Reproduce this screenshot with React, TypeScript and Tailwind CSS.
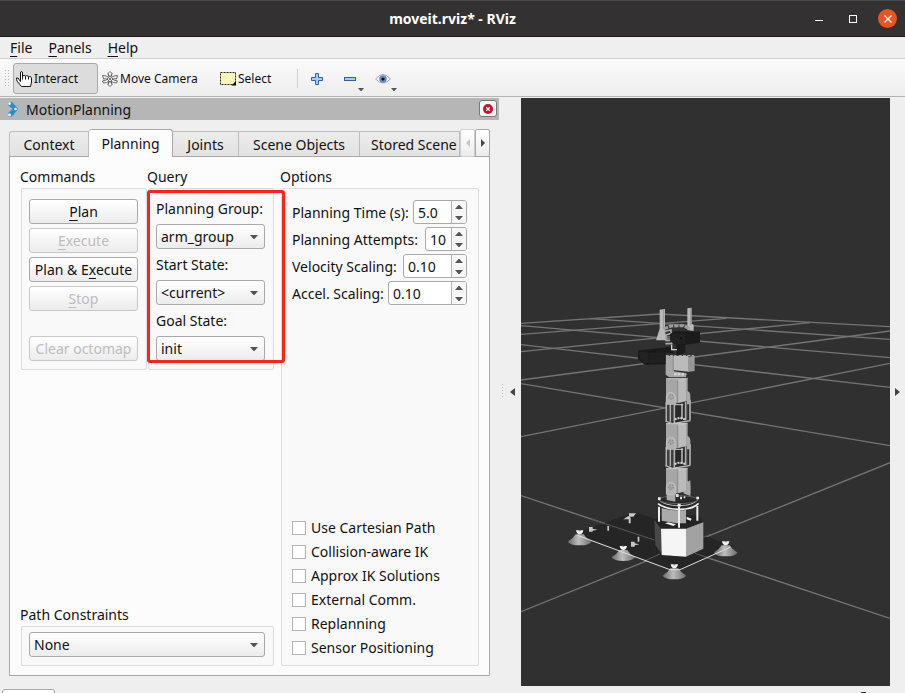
import type { ReactNode } from "react";

const buttonFace =
  "rounded-[3px] border bg-linear-to-b from-white to-[#ececec] leading-5";

function Mnemonic({ children }: { children: ReactNode }) {
  return <span className="underline decoration-1 underline-offset-3">{children}</span>;
}

function TitleBar() {
  return (
    <header className="grid h-[37px] shrink-0 grid-cols-[1fr_auto_1fr] items-center border-t border-b border-t-[#4a4848] border-b-[#1e1d1d] bg-[#333131] pr-2 pl-2">
      <h1 className="col-start-2 text-sm font-bold text-white">moveit.rviz* - RViz</h1>
      <div className="flex items-center justify-end">
        <button aria-label="Minimize" className="flex h-5 w-[34px] items-center justify-center">
          <span className="mt-1 h-px w-2 bg-white" />
        </button>
        <button aria-label="Maximize" className="flex h-5 w-[34px] items-center justify-center">
          <span className="size-2 border border-white" />
        </button>
        <button
          aria-label="Close"
          className="ml-2 flex size-[19px] items-center justify-center rounded-full bg-[#e95420]"
        >
          <svg viewBox="0 0 8 8" className="size-2" stroke="white" strokeWidth="1.3">
            <path d="M0.5 0.5 7.5 7.5M7.5 0.5 0.5 7.5" />
          </svg>
        </button>
      </div>
    </header>
  );
}

function MenuBar() {
  return (
    <nav className="flex h-[22px] shrink-0 items-center gap-4 border-b border-[#cfcfcf] bg-[#efefef] pl-[10px]">
      <button><Mnemonic>F</Mnemonic>ile</button>
      <button><Mnemonic>P</Mnemonic>anels</button>
      <button><Mnemonic>H</Mnemonic>elp</button>
    </nav>
  );
}

function DropArrow() {
  return (
    <svg viewBox="0 0 8 4" className="h-1 w-2" fill="#555">
      <path d="M0 0H8L4.5 4H3.5Z" />
    </svg>
  );
}

function MenuArrow() {
  return (
    <svg viewBox="0 0 6 3" className="h-[3px] w-[6px]" fill="#555">
      <path d="M0 0H6L3.5 3H2.5Z" />
    </svg>
  );
}

function ToolBar() {
  return (
    <div className="flex h-[38px] shrink-0 items-center border-b border-[#b4b4b4] bg-linear-to-b from-[#fbfbfb] to-[#ededed] pt-[2px] pl-[5px] text-xs">
      <svg width="8" height="17" fill="#b8b8b8">
        {[0, 3, 6, 9, 12, 15].map((y) => (
          <g key={y}>
            <rect x="0" y={y} width="1" height="1" />
            <rect x="3" y={y} width="1" height="1" />
          </g>
        ))}
      </svg>
      <button className="flex h-[31px] w-[85px] items-center gap-[2px] rounded-[3px] border border-[#a9a9a9] bg-[#dcdcdc] pl-[2px]">
        <svg viewBox="0 0 16 16" className="size-4" fill="white" stroke="#111" strokeWidth="1">
          <path d="M4.5 8V2Q4.5 .5 5.5 .5T6.5 2V5.5Q6.5 4.500 8 4.500T9.500 5.500Q10 4.500 11 4.500T12.500 6Q15.500 4.500 15.500 8V11L14.500 15.500H5.500L1 10Q.500 9 .500 7Q2.500 6 3.500 9.500L4.500 10.500V8" />
          <path d="M6.500 5V8.500M9.500 5.500V8.500M12.500 6V8.500" />
        </svg>
        Interact
      </button>
      <button className="ml-1 flex w-[117px] items-center gap-[2px]">
        <svg viewBox="0 0 16 16" className="size-4 shrink-0" fill="#f7f7f7" stroke="#666" strokeWidth="1">
          <path d="M8 .5 10.500 3H9.500V5H6.500V3H5.500ZM8 15.500 5.500 13H6.500V11H9.500V13H10.500Z" />
          <path d="M.5 4.500 4 5 12 9 15.500 10 14.500 12 11.500 11.500 3.500 7.500 1.500 8Z" />
          <path d="M15.500 4.500 12 5 4 9 .5 10 1.500 12 4.500 11.500 12.500 7.500 14.500 8Z" />
          <path d="M8 5 11 8 8 11 5 8Z" />
          <circle cx="8" cy="8" r=".8" fill="#444" />
        </svg>
        Move Camera
      </button>
      <button className="ml-px flex w-[77px] items-center gap-[2px]">
        <svg viewBox="0 0 16 14" className="h-[14px] w-4 shrink-0">
          <rect x=".5" y=".5" width="15" height="12" fill="#fbf5b9" stroke="#222" strokeDasharray="2 1" />
          <path d="M16 9V13.500H11.500Z" fill="#000" />
        </svg>
        Select
      </button>
      <span className="mr-[13px] h-[19px] w-px bg-[#cfcfcf]" />
      <button aria-label="Add tool">
        <svg viewBox="0 0 12 12" className="size-3" fill="#a9cdf0" stroke="#2d62a3">
          <path d="M4.500.5H7.500V4.500H11.500V7.500H7.500V11.500H4.500V7.500H.5V4.500H4.500Z" />
        </svg>
      </button>
      <button aria-label="Remove tool" className="ml-[21px] flex h-6 items-end">
        <svg viewBox="0 0 12 4" className="mb-[10px] h-1 w-3" fill="#a9cdf0" stroke="#2d62a3">
          <rect x=".5" y=".5" width="11" height="3" />
        </svg>
        <span className="ml-[2px]"><MenuArrow /></span>
      </button>
      <button aria-label="Views" className="ml-[11px] flex h-6 items-end">
        <svg viewBox="0 0 16 10" className="mb-[7px] h-[10px] w-4">
          <path d="M.5 5Q8-4 15.500 5Q8 13 .5 5Z" fill="#eee" stroke="#aaa" />
          <circle cx="8" cy="5" r="3.700" fill="#6d86c4" />
          <circle cx="8" cy="5" r="1.600" fill="#111" />
        </svg>
        <span><MenuArrow /></span>
      </button>
    </div>
  );
}

function DockTitle() {
  return (
    <div className="flex h-[22px] items-center bg-[#b6b6b6] pr-[2px] pl-[7px]">
      <svg viewBox="0 0 11 16" className="h-4 w-[11px]">
        <path d="M1 1H5L10.500 7V9L5 15.500H1V12L5.500 8 1 4Z" fill="#2a8fd0" />
        <circle cx="2.500" cy="2.500" r="1.500" fill="#e8f4fc" />
        <circle cx="8.500" cy="8" r="1.300" fill="#e8f4fc" />
        <circle cx="2.500" cy="13.800" r="1.500" fill="#e8f4fc" />
      </svg>
      <h2 className="mt-px ml-2 flex-1">MotionPlanning</h2>
      <button
        aria-label="Close panel"
        className="mb-px flex h-[17px] w-[18px] items-center justify-center rounded-[3px] border border-[#777] bg-[#f6f6f6]"
      >
        <svg viewBox="0 0 10 10" className="size-[10px]">
          <circle cx="5" cy="5" r="5" fill="#c8102e" />
          <path d="M3.200 3.200 6.800 6.800M6.800 3.200 3.200 6.800" stroke="white" strokeWidth="1.300" />
        </svg>
      </button>
    </div>
  );
}

const idleTab =
  "h-[25px] shrink-0 border-t border-r border-[#bdbdbd] bg-linear-to-b from-[#ececec] to-[#e2e2e2] whitespace-nowrap";

function TabStrip() {
  return (
    <div className="z-10 -mb-px flex h-7 items-end" role="tablist">
      <div className="flex h-7 min-w-0 flex-1 items-end overflow-hidden">
        <button role="tab" className={`${idleTab} mb-px w-20 rounded-tl-[3px] border-l pt-px`}>Context</button>
        <button
          role="tab"
          aria-selected="true"
          className="h-7 w-[84px] shrink-0 rounded-t-[3px] border-t border-r border-[#a9a9a9] bg-[#fcfcfc] pt-px"
        >
          Planning
        </button>
        <button role="tab" className={`${idleTab} mb-px w-[66px] pt-px`}>Joints</button>
        <button role="tab" className={`${idleTab} mb-px w-[121px] pt-px`}>Scene Objects</button>
        <button role="tab" className={`${idleTab} mb-px w-[100px] pt-px pl-[11px] text-left`}>Stored Scene</button>
      </div>
      <button
        aria-label="Scroll tabs left"
        className="flex h-7 w-[15px] items-center justify-center rounded-[2px] border border-[#cfcfcf] bg-linear-to-b from-white to-[#ececec]"
      >
        <svg viewBox="0 0 4 8" className="h-2 w-1" fill="#c5c5c5"><path d="M4 0V8L0 4Z" /></svg>
      </button>
      <button
        aria-label="Scroll tabs right"
        className="flex h-7 w-[15px] items-center justify-center rounded-[2px] border border-[#a9a9a9] bg-linear-to-b from-white to-[#ececec]"
      >
        <svg viewBox="0 0 4 8" className="h-2 w-1" fill="#444"><path d="M0 0V8L4 4Z" /></svg>
      </button>
    </div>
  );
}

function Combo({ id, value, name }: { id: string; value: string; name?: string }) {
  return (
    <div className="relative h-[25px]">
      <select
        id={id}
        aria-label={name}
        className={`${buttonFace} h-[25px] w-full appearance-none border-[#a9a9a9] pl-1`}
      >
        <option>{value}</option>
      </select>
      <span className="pointer-events-none absolute top-[11px] right-[7px]">
        <DropArrow />
      </span>
    </div>
  );
}

function Field({ id, label, value }: { id: string; label: string; value: string }) {
  return (
    <div>
      <label htmlFor={id} className="mb-[5px] block h-5 leading-5 whitespace-nowrap">{label}</label>
      <Combo id={id} value={value} />
    </div>
  );
}

function Group({ title, className, children }: { title: string; className: string; children: ReactNode }) {
  return (
    <section className="flex min-w-0 flex-1 flex-col">
      <h3 className="-ml-px h-[21px] leading-5">{title}</h3>
      <div className={`flex flex-1 flex-col rounded-[2px] border border-[#dcdcdc] bg-[#f9f9f9] ${className}`}>
        {children}
      </div>
    </section>
  );
}

const command = `${buttonFace} h-[25px] whitespace-nowrap`;
const enabled = "border-[#a9a9a9]";
const disabled = "border-[#c8c8c8] text-[#bdbdbd]";

function Commands() {
  return (
    <Group title="Commands" className="gap-1 pt-[10px] pr-2 pb-2 pl-[7px]">
      <button className={`${command} ${enabled}`}><Mnemonic>P</Mnemonic>lan</button>
      <button disabled className={`${command} ${disabled}`}><Mnemonic>E</Mnemonic>xecute</button>
      <button className={`${command} ${enabled}`}>Plan &amp; E<Mnemonic>x</Mnemonic>ecute</button>
      <button disabled className={`${command} ${disabled}`}><Mnemonic>S</Mnemonic>top</button>
      <button disabled className={`${command} ${disabled} mt-[21px]`}>Clear octomap</button>
    </Group>
  );
}

function Query() {
  return (
    <div className="relative flex flex-1">
      <Group title="Query" className="gap-[6px] pt-[10px] pr-2 pb-2 pl-[7px]">
        <Field id="planning-group" label="Planning Group:" value="arm_group" />
        <Field id="start-state" label="Start State:" value="<current>" />
        <Field id="goal-state" label="Goal State:" value="init" />
      </Group>
      <div className="pointer-events-none absolute top-[23px] -right-[11px] bottom-[7px] -left-px rounded-[3px] border-[3px] border-[#fb2418]" />
    </div>
  );
}

const spins = [
  { id: "time", label: "Planning Time (s):", value: "5.0", width: "w-[54px]" },
  { id: "attempts", label: "Planning Attempts:", value: "10", width: "w-[42px]" },
  { id: "velocity", label: "Velocity Scaling:", value: "0.10", width: "w-16" },
  { id: "accel", label: "Accel. Scaling:", value: "0.10", width: "w-[79px]" },
];

const checks = [
  "Use Cartesian Path",
  "Collision-aware IK",
  "Approx IK Solutions",
  "External Comm.",
  "Replanning",
  "Sensor Positioning",
];

function Options() {
  return (
    <Group title="Options" className="pt-[11px] pr-[11px] pb-[5px] pl-[10px]">
      <div className="flex flex-col gap-[3px]">
        {spins.map((s) => (
          <div key={s.id} className="flex h-6 items-center justify-between">
            <label htmlFor={s.id} className="pt-px whitespace-nowrap">{s.label}</label>
            <div className={`flex h-6 shrink-0 overflow-hidden rounded-[3px] border border-[#a9a9a9] bg-white ${s.width}`}>
              <input id={s.id} defaultValue={s.value} className="min-w-0 flex-1 pt-px pl-1" />
              <div className="flex w-[15px] flex-col border-l border-[#b4b4b4] bg-[#f7f7f7]">
                <button aria-label={`Increase ${s.label}`} className="flex flex-1 items-center justify-center">
                  <svg viewBox="0 0 8 4" className="h-1 w-2" fill="#555"><path d="M0 4H8L4.500 0H3.500Z" /></svg>
                </button>
                <button aria-label={`Decrease ${s.label}`} className="flex flex-1 items-center justify-center">
                  <DropArrow />
                </button>
              </div>
            </div>
          </div>
        ))}
      </div>
      <div className="mt-auto">
        {checks.map((c) => (
          <label key={c} className="flex h-6 items-center gap-[5px] whitespace-nowrap">
            <input type="checkbox" className="mb-px size-[14px] appearance-none border border-[#b4b4b4] bg-white" />
            {c}
          </label>
        ))}
      </div>
    </Group>
  );
}

function MotionPlanningDock() {
  return (
    <aside className="flex w-[499px] shrink-0 flex-col">
      <DockTitle />
      <div className="flex flex-1 flex-col pt-[9px] pr-[9px] pl-[9px]">
        <TabStrip />
        <div className="flex flex-1 gap-[7px] border border-[#a9a9a9] bg-[#fcfcfc] pt-[10px] pr-[10px] pb-[9px] pl-[11px]">
          <div className="flex w-[253px] shrink-0 flex-col justify-between">
            <div className="flex gap-px">
              <Commands />
              <Query />
            </div>
            <div className="flex">
              <Group title="Path Constraints" className="pt-[5px] pr-2 pb-2 pl-[7px]">
                <Combo id="constraints" name="Path Constraints" value="None" />
              </Group>
            </div>
          </div>
          <Options />
        </div>
      </div>
      <div className="h-[17px] overflow-hidden pt-[13px] pl-[2px]">
        <button aria-label="Reset" className="block h-6 w-[53px] rounded-[3px] border border-[#a9a9a9] bg-white" />
      </div>
    </aside>
  );
}

const gridLines = [
  "M33 100 450 72 1140 110",
  "M33 133 650 85",
  "M33 185 900 98",
  "M33 270 1140 123",
  "M33 440 1140 220",
  "M33 965 1140 518",
  "M240 86 1140 148",
  "M33 107 1140 203",
  "M33 164 1140 292",
  "M33 281 1140 467",
  "M33 617 1140 985",
];

function Foot({ x, y }: { x: number; y: number }) {
  return (
    <g transform={`translate(${x} ${y})`}>
      <path d="M-12-8H12Q20 6 36 14Q28 25 0 25T-36 14Q-20 6-12-8Z" fill="url(#cone)" />
      <path d="M-11-20H11Q9-8 0-8T-11-20Z" fill="#f4f4f4" />
      <path d="M-3-21H3V-17H-3Z" fill="#888" />
    </g>
  );
}

function Servo({ y }: { y: number }) {
  return (
    <g transform={`translate(0 ${y})`}>
      <path d="M468 2 478 0H533V70L502 77H468Z" fill="#a6a6a6" />
      <path d="M503 7H531V68L503 76Z" fill="#bababa" />
      <path d="M468 3H532L502 8" fill="none" stroke="#d6d6d6" strokeWidth="2" />
      <path d="M503 7V76M531 2V70" stroke="#777" strokeWidth="2" />
      <path d="M531 40Q541 42 541 54V80H531Z" fill="#aaa" />
      <path d="M469 80V58Q471 44 482 44T496 58V80Z" fill="#b2b2b2" stroke="#c8c8c8" strokeWidth="2" />
      <circle cx="483" cy="58" r="7" fill="#a6a6a6" stroke="#666" strokeWidth="2" strokeDasharray="4 4" />
    </g>
  );
}

function Bracket({ y }: { y: number }) {
  return (
    <g transform={`translate(0 ${y})`}>
      <path d="M468 0V53L485 60 541 50V-5" fill="#292929" />
      <path d="M469-4V54M481 0V54M493 0V58M516 0V46M527-6V50M540-12V50" stroke="#b0b0b0" strokeWidth="5" fill="none" />
      <path d="M487-4V54M475 0V50M533-5V48" stroke="#444" strokeWidth="3" />
      <path d="M467 52 487 60 541 51" stroke="#c4c4c4" strokeWidth="4" fill="none" />
      <path d="M494 47 510 42 525 47" stroke="#ddd" strokeWidth="6" strokeDasharray="6 3" fill="none" />
      <path d="M495 3H520" stroke="#ccc" strokeWidth="3" />
    </g>
  );
}

function RobotView() {
  return (
    <svg
      role="img"
      aria-label="Robot arm"
      viewBox="33 -576 1107 1764"
      preserveAspectRatio="xMidYMid slice"
      className="h-full w-full bg-[#303030]"
    >
      <defs>
        <linearGradient id="cone">
          <stop offset="0" stopColor="#666" />
          <stop offset=".45" stopColor="#bdbdbd" />
          <stop offset="1" stopColor="#6c6c6c" />
        </linearGradient>
      </defs>
      <g fill="none" stroke="#747474" strokeWidth="4">
        {gridLines.map((d) => <path key={d} d={d} />)}
      </g>

      {/* base plate */}
      <path d="M196 730 350 675 385 670 670 768 510 839H480Z" fill="#252525" />
      <path d="M240 686 433 750M405 812 450 792M555 790 600 805M580 742 600 733" stroke="#5a5a5a" strokeWidth="3" />
      <Foot x={209} y={741} />
      <Foot x={340} y={788} />
      <Foot x={493} y={843} />
      <Foot x={647} y={774} />
      <path d="M202 736 480 839H510L662 771" fill="none" stroke="#e0e0e0" strokeWidth="3" />
      <path d="M357 670H378L370 680H357ZM340 688 355 678 362 683V700H356V688ZM237 711H248V716L262 719 248 722V725H237ZM292 708H297V722H292ZM383 740H388V755H383ZM363 755H374V760L388 763 374 766V770H363Z" fill="#c9c9c9" />

      {/* pedestal */}
      <path d="M433 690 455 675H565L580 697 528 716H453Z" fill="#242424" />
      <path d="M433 690 453 716V790L436 764Z" fill="#484848" />
      <path d="M453 716H528V800L455 795Z" fill="#f5f5f5" />
      <path d="M528 716 580 697V776L528 800Z" fill="#a2a2a2" />
      <path d="M455 655H528V700H500L455 692Z" fill="#aaa" />
      <path d="M465 700 475 697 498 703 490 708ZM530 680 545 686 542 692 530 688Z" fill="#eee" />
      <path d="M444 628V648Q465 661 507 661T566 646V627Z" fill="#272727" />
      <path d="M444 641Q465 658 507 658T566 640" fill="none" stroke="#eee" strokeWidth="5" />
      <path d="M446 630Q465 647 507 647T564 629" fill="none" stroke="#bbb" strokeWidth="3" />
      <ellipse cx="505" cy="629" rx="58" ry="12" fill="#292929" stroke="#777" strokeWidth="2" />
      <path d="M447 650V695M562 648V692M507 650V713" stroke="#efefef" strokeWidth="6" />
      <path d="M444 622H452V630H444ZM559 620H567V628H559ZM503 641H512V650H503Z" fill="#eee" />

      {/* arm links */}
      <path d="M470 600H496V635L470 630ZM529 580 541 570V618L520 610Z" fill="#ababab" />
      <path d="M498 612H506V621H498ZM510 620H516V628H510ZM521 619H526V625H521Z" fill="#ddd" />
      <Servo y={533} />
      <Bracket y={475} />
      <Servo y={398} />
      <Bracket y={341} />
      <Servo y={263} />
      <path d="M467 198H490L492 244 530 250 528 262H478L467 254Z" fill="#a8a8a8" />
      <path d="M489 198H535V245L489 240Z" fill="#bbb" />
      <path d="M534 202 554 197V243L534 246Z" fill="#979797" />
      <path d="M467 197H552" stroke="#bbb" strokeWidth="3" strokeDasharray="9 4" />
      <path d="M490 198V243" stroke="#777" strokeWidth="2" />
      <path d="M492 253H524" stroke="#ddd" strokeWidth="6" strokeDasharray="8 3" />
      <path d="M467 263H532" stroke="#333" strokeWidth="2" />

      {/* camera and gripper */}
      <path d="M384 183Q388 179 400 179L480 171 492 190H467V223L404 224 384 207Z" fill="#1a1a1a" />
      <path d="M388 186Q404 181 416 190V218L404 220 388 206Z" fill="#222" />
      <path d="M418 190 464 186V218L418 220Z" fill="#202020" />
      <path d="M449 59 465 57V112L468 151H438L449 116Z" fill="#b9b9b9" />
      <path d="M532 55 545 53V101L551 104V123L532 120Z" fill="#b9b9b9" />
      <path d="M461 60V116M542 55V106" stroke="#999" strokeWidth="3" />
      <path d="M462 116 483 108 520 107 540 117" stroke="#9c9c9c" strokeWidth="9" strokeDasharray="13 3" fill="none" />
      <path d="M462 124 483 120V130L468 135V151H485V161H466" fill="none" stroke="#a9a9a9" strokeWidth="5" />
      <path d="M480 132 496 123 570 125V158L526 164V188L499 197 499 164 481 155Z" fill="#1b1b1b" />
      <path d="M482 132H526V162L499 163 482 154Z" fill="#202020" />
      <circle cx="513" cy="145" r="3" fill="#0c0c0c" />
      <path d="M485 164V179H501" stroke="#d0d0d0" strokeWidth="4" fill="none" />
    </svg>
  );
}

export default function App() {
  return (
    <div className="flex h-screen flex-col overflow-hidden bg-[#efefef] font-['Noto_Sans','Open_Sans',sans-serif] text-sm text-[#111]">
      <TitleBar />
      <MenuBar />
      <ToolBar />
      <main className="flex min-h-0 flex-1 pt-px">
        <MotionPlanningDock />
        <button aria-label="Collapse left panel" className="flex w-[22px] shrink-0 items-center gap-[6px] pb-2 pl-[3px]">
          <svg width="2" height="15" fill="#bbb">
            {[0, 3, 6, 9, 12].map((y) => <rect key={y} y={y} width="1" height="1" />)}
          </svg>
          <svg viewBox="0 0 5 8" className="h-2 w-[5px]" fill="#444"><path d="M5 0V8L0 4Z" /></svg>
        </button>
        <div className="flex min-w-0 flex-1 flex-col">
          <div className="min-h-0 flex-1"><RobotView /></div>
          <div className="flex h-[7px] items-end justify-end pr-6">
            <span className="h-px w-[5px] bg-[#333]" />
          </div>
        </div>
        <button aria-label="Collapse right panel" className="flex w-[15px] shrink-0 items-center pb-2 pl-[5px]">
          <svg viewBox="0 0 5 8" className="h-2 w-[5px]" fill="#444"><path d="M0 0V8L5 4Z" /></svg>
        </button>
      </main>
    </div>
  );
}
